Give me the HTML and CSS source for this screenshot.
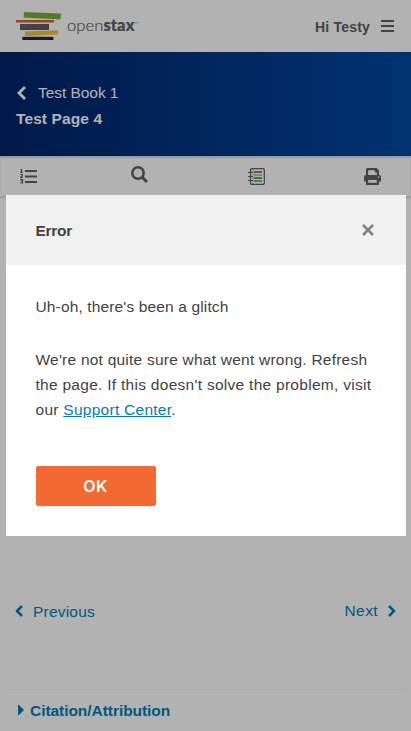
FILE: index.html
```
<!DOCTYPE html>
<html lang="en">
<head>
<meta charset="utf-8">
<meta name="viewport" content="width=device-width, initial-scale=1">
<title>Test Page 4</title>
<link rel="stylesheet" href="styles.css">
</head>
<body>
<div class="page">
  <header class="navbar">
    <a class="logo" aria-label="openstax">
      <svg width="45" height="30" viewBox="0 0 45 30">
        <path fill="#77b036" d="M8 0 45 1.500 44.500 7.500 7.500 5.500z"/>
        <path fill="#df5c3e" d="M0 8h38v2.500H0z"/>
        <path fill="#5e6062" d="M4 12h29v6H4z"/>
        <path fill="#f0c82b" d="M9 19.500 42 18.300v4.200L9 24z"/>
        <path fill="#232652" d="M6.300 24.800h31.200V28H6.300z"/>
      </svg>
      <span class="wordmark">open<b>stax</b><sup>™</sup></span>
    </a>
    <div class="user">
      <span class="greeting">Hi Testy</span>
      <svg width="13" height="13" viewBox="0 0 13 13"><path fill="#5e6062" d="M0 0h13v2H0zM0 5h13v2H0zM0 10h13v2H0z"/></svg>
    </div>
  </header>
  <div class="bookbar">
    <a class="book"><svg width="10" height="14" viewBox="0 0 10 14"><path fill="none" stroke="#fff" stroke-width="2.800" d="M9 1 3 7l6 6"/></svg><span class="book-title">Test Book 1</span></a>
    <h1 class="page-title">Test Page 4</h1>
  </div>
  <nav class="toolbar">
    <svg class="toc" width="18" height="16" viewBox="0 0 18 16">
      <path fill="#5e6062" d="M5 2h12v2H5zM5 7.500h12v2H5zM5 13h12v2H5z"/>
      <path fill="none" stroke="#5e6062" stroke-width="1.200" d="M.5 1.500h1v3M.3 4.300h2.400M.3 6.500h2v1.500L.5 9.500h2.200M.3 11.500h2.200l-1 1.500h1v2H.3"/>
    </svg>
    <svg class="search" width="17" height="17" viewBox="0 0 17 17"><circle cx="7" cy="7" r="5.700" fill="none" stroke="#5e6062" stroke-width="2.500"/><path stroke="#5e6062" stroke-width="3" d="m11 11 5 5"/></svg>
    <svg class="highlights" width="18" height="18" viewBox="0 0 18 18">
      <rect x="2.500" y=".7" width="13.800" height="15.600" rx="1.200" fill="none" stroke="#5e6062" stroke-width="1.300"/>
      <path stroke="#5e6062" stroke-opacity=".4" d="M5 1v15"/>
      <path stroke="#5e6062" d="M0 4.500h5M0 8.500h5M0 12.500h5"/>
      <path fill="#7670c8" d="M6 3h8v2H6z"/><path fill="#f0c21c" d="M6 6h8v2H6z"/><path fill="#3c9cc5" d="M6 9h8v2H6z"/><path fill="#82c600" d="M6 12h8v2H6z"/>
    </svg>
    <svg class="print" width="17" height="17" viewBox="0 0 17 17"><path fill="#5e6062" fill-rule="evenodd" d="M2 1.500A1.500 1.500 0 0 1 3.500 0h9L15 2.500V7a2 2 0 0 1 2 2v4.500h-2V17H2v-3.500H0V9a2 2 0 0 1 2-2zM4.200 2.200V7h8.600V4.400h-2V2.200zM4.200 12v2.800h8.600V12z"/><circle cx="14.500" cy="9.300" r=".8" fill="#fff"/></svg>
  </nav>
  <main class="content"></main>
  <nav class="pager">
    <a class="prev"><svg width="8" height="12" viewBox="0 0 8 12"><path fill="none" stroke="#027eb5" stroke-width="2.500" d="M7 1 2 6l5 5"/></svg><span>Previous</span></a>
    <a class="next"><span>Next</span><svg width="8" height="12" viewBox="0 0 8 12"><path fill="none" stroke="#027eb5" stroke-width="2.500" d="m1 1 5 5-5 5"/></svg></a>
  </nav>
  <div class="attribution"><svg width="6" height="10" viewBox="0 0 6 10"><path fill="#027eb5" d="M0 0h1l5 5-5 5H0z"/></svg><span>Citation/Attribution</span></div>
</div>
<div class="overlay">
  <section class="modal" role="dialog">
    <header class="modal-header">
      <h2 class="modal-title">Error</h2>
      <svg width="12" height="12" viewBox="0 0 12 12"><path stroke="#818181" stroke-width="2.500" d="m1 1 10 10M11 1 1 11"/></svg>
    </header>
    <div class="modal-body">
      <p class="lead">Uh-oh, there's been a glitch</p>
      <p class="message"><span class="l1">We're not quite sure what went wrong. Refresh</span><br><span class="l2">the page. If this doesn't solve the problem, visit</span><br><span class="l3">our <a class="link">Support Center</a>.</span></p>
      <button class="ok">OK</button>
    </div>
  </section>
</div>
</body>
</html>
```
FILE: styles.css
```
* { box-sizing: border-box; }
body { margin: 0; height: 731px; overflow: hidden; background: #fff; color: #424242; font: 15.5px/25px "Liberation Sans", Arial, sans-serif; }
h1, h2, p { margin: 0; }
svg { display: block; flex: none; }
.page { display: flex; flex-direction: column; height: 731px; }
.navbar { height: 52px; display: flex; justify-content: space-between; padding: 0 17px 0 16px; }
.logo { display: flex; padding-top: 12px; }
.wordmark { margin: 1px 0 0 6px; font: 300 16.5px/24px Lato, sans-serif; letter-spacing: .1px; color: #5e6062; white-space: nowrap; -webkit-text-stroke: .2px #5e6062; }
.wordmark b { font-weight: 900; }
.wordmark sup { font-size: 6px; line-height: 0; vertical-align: 5px; -webkit-text-stroke: 0; }
.user { display: flex; align-items: center; gap: 11px; color: #5e6062; }
.greeting { font-weight: 700; font-size: 14px; line-height: 20px; padding-top: 2px; letter-spacing: .2px; }
.bookbar { height: 104px; padding: 28px 16px 0; color: #fff; background: linear-gradient(to right, #002469, #004aa2); }
.book { display: flex; align-items: center; height: 25px; }
.book-title { margin-left: 12px; letter-spacing: -.05px; }
.page-title { font-size: 15.5px; line-height: 26px; padding-top: 1px; letter-spacing: .1px; }
.toolbar { height: 40px; display: flex; padding: 12px 0 0 20px; box-shadow: 0 2px 2px rgba(0, 0, 0, .14), inset 0 2px 2px rgba(0, 0, 0, .14); }
.search { margin: -2px 0 0 93px; }
.highlights { margin-left: 100px; }
.print { margin-left: 98px; }
.content { flex: 1; }
.pager { height: 93px; display: flex; justify-content: space-between; padding: 2px 15px 0 15px; color: #027eb5; letter-spacing: .2px; }
.prev, .next { display: flex; align-items: center; gap: 10px; height: 25px; }
.next span { letter-spacing: .4px; }
.prev span { padding-top: 2px; }
.attribution { height: 42px; display: flex; align-items: center; gap: 6px; padding-left: 18px; color: #027eb5; font-weight: 700; letter-spacing: -.05px; background: radial-gradient(ellipse at top, #f3f3f3 85%, transparent) center top / 395px 1px no-repeat; }
.overlay { position: fixed; inset: 0; display: flex; justify-content: center; align-items: center; background: rgba(0, 0, 0, .3); padding-left: 1px; }
.modal { width: 400px; height: 341px; background: #fff; }
.modal-header { height: 70px; display: flex; align-items: center; justify-content: space-between; padding: 0 32px 0 29.5px; background: #f1f1f1; }
.modal-title { font-size: 15.5px; line-height: 25px; letter-spacing: -.3px; }
.modal-body { padding: 29px 30px 30px 29.5px; }
.lead { letter-spacing: .14px; }
.message { margin: 28px 0 44px; white-space: nowrap; }
.l1 { letter-spacing: .23px; }
.l2 { letter-spacing: .28px; }
.l3 { letter-spacing: .27px; }
.link { color: #027eb5; text-decoration: underline; }
.ok { display: block; width: 120px; height: 40px; margin-left: .5px; border: 0; border-radius: 2px; background: #f36b32; color: #fff; font: 600 16px Inter, sans-serif; letter-spacing: .4px; padding: 0 1px 1px 0; }
```
